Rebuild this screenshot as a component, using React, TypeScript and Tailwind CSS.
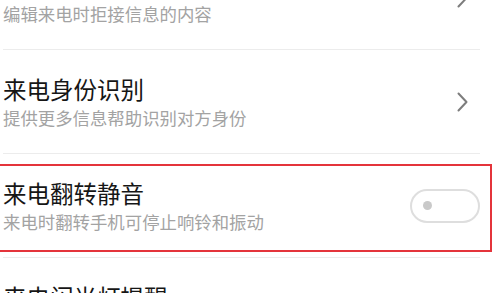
const CJK = "font-['Noto_Sans_CJK_SC','Noto_Sans',sans-serif]";

type Row = {
  title: string;
  subtitle?: string;
  trailing: "chevron" | "toggle" | "none";
  highlighted?: boolean;
};

const rows: Row[] = [
  { title: "拒接短信", subtitle: "编辑来电时拒接信息的内容", trailing: "chevron" },
  { title: "来电身份识别", subtitle: "提供更多信息帮助识别对方身份", trailing: "chevron" },
  {
    title: "来电翻转静音",
    subtitle: "来电时翻转手机可停止响铃和振动",
    trailing: "toggle",
    highlighted: true,
  },
  { title: "来电闪光灯提醒", subtitle: "来电时闪光灯闪烁提醒", trailing: "none" },
];

export default function App() {
  return (
    <div className={`h-[293px] w-[503px] overflow-hidden bg-white ${CJK}`}>
      {/* the first row is scrolled half out of view */}
      <div className="-mt-[54px] flex flex-col">
        {rows.map((row) => (
          <SettingRow key={row.title} row={row} />
        ))}
      </div>
    </div>
  );
}

function SettingRow({ row }: { row: Row }) {
  return (
    <div className="relative">
      <div className="ml-[3px] flex h-[104px] w-[477px] items-center border-b border-[#ececec]">
        <div className="flex flex-1 flex-col">
          <span className="text-[23.5px] leading-[28px] text-[#161616]">
            {row.title}
          </span>
          {row.subtitle ? (
            <span className="mt-[5px] text-[17.4px] leading-[20px] text-[#a3a3a3]">
              {row.subtitle}
            </span>
          ) : null}
        </div>
        {row.trailing === "chevron" ? <Chevron /> : null}
        {row.trailing === "toggle" ? <Toggle /> : null}
      </div>

      {/* annotation frame drawn over the row */}
      {row.highlighted ? (
        <div className="pointer-events-none absolute top-[10px] left-[-4px] h-[88px] w-[496px] border-[2.5px] border-[#e4343b]" />
      ) : null}
    </div>
  );
}

function Chevron() {
  return (
    <svg
      width="11"
      height="20"
      viewBox="0 0 11 20"
      fill="none"
      className="mr-[12px]"
    >
      <polyline
        points="1.5,1.5 9.5,10 1.5,18.5"
        stroke="#7d7d7d"
        strokeWidth="2"
        strokeLinecap="round"
        strokeLinejoin="round"
      />
    </svg>
  );
}

function Toggle() {
  return (
    <div className="flex h-[34px] w-[70px] items-center rounded-full border-2 border-[#dedede] pl-[11px]">
      <span className="h-[9px] w-[9px] rounded-full bg-[#c9c9c9]" />
    </div>
  );
}
